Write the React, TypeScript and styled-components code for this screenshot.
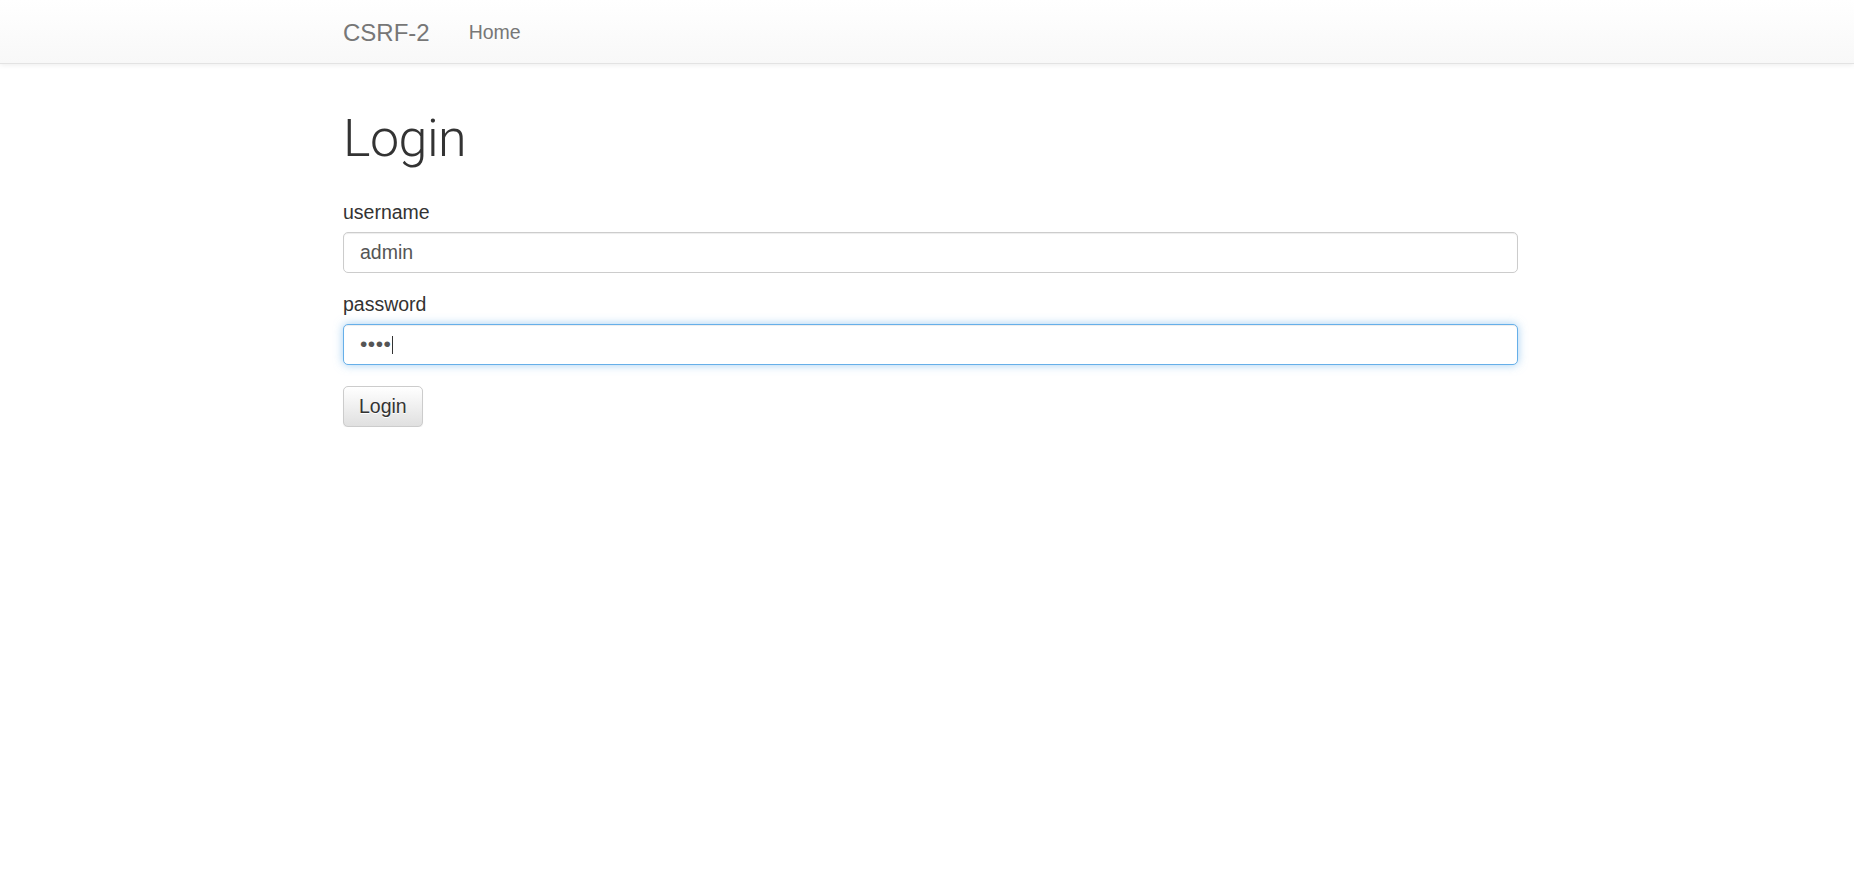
import React from "react";
import styled, { createGlobalStyle } from "styled-components";

const GlobalStyle = createGlobalStyle`
  html, body {
    margin: 0;
    padding: 0;
    background: #fff;
  }

  body {
    font-family: "Liberation Sans", Arial, sans-serif;
    font-size: 19.5px;
    color: #333;
  }
`;

const Navbar = styled.nav`
  height: 63px;
  background-image: linear-gradient(to bottom, #ffffff 0%, #f8f8f8 100%);
  border-bottom: 1px solid #e3e3e3;
  box-shadow: inset 0 1px 0 rgba(255, 255, 255, 0.15), 0 1px 5px rgba(0, 0, 0, 0.075);
`;

const Container = styled.div`
  width: 1175px;
  margin: 0 auto;
  padding-left: 7px;
  box-sizing: content-box;
`;

const NavInner = styled(Container)`
  display: flex;
  align-items: center;
  gap: 39px;
  height: 63px;
`;

const Brand = styled.a`
  font-size: 24px;
  color: #777;
  text-decoration: none;
  line-height: 63px;
  padding-top: 2px;
`;

const NavLink = styled.a`
  font-size: 19.5px;
  color: #777;
  text-decoration: none;
  line-height: 63px;
  padding-top: 2px;
`;

const Main = styled(Container)`
  padding-top: 45px;
`;

const Title = styled.h1`
  margin: 0;
  font-family: Roboto, "Liberation Sans", sans-serif;
  font-weight: 300;
  font-size: 52px;
  line-height: 60px;
  color: #333;
  letter-spacing: -0.5px;
`;

const Form = styled.form`
  margin-top: 31px;
`;

const Group = styled.div`
  margin-bottom: 19.5px;
`;

const Label = styled.label`
  display: block;
  font-size: 19.5px;
  line-height: 24px;
  margin-bottom: 7.5px;
  color: #333;
`;

const FieldWrap = styled.div`
  position: relative;
`;

const Input = styled.input<{ $focused?: boolean }>`
  display: block;
  box-sizing: border-box;
  width: 100%;
  height: 41px;
  padding: 0 16px;
  font-family: "Liberation Sans", Arial, sans-serif;
  font-size: 19.5px;
  color: #555;
  background: #fff;
  border: 1px solid ${(p) => (p.$focused ? "#66afe9" : "#ccc")};
  border-radius: 5px;
  outline: none;
  box-shadow: ${(p) =>
    p.$focused
      ? "inset 0 1px 1px rgba(0,0,0,.075), 0 0 10px rgba(102,175,233,.6)"
      : "inset 0 1px 1px rgba(0,0,0,.075)"};

  &[type="password"] {
    font-size: 21px;
    letter-spacing: 0.5px;
  }
`;

const Caret = styled.span`
  position: absolute;
  left: 49px;
  top: 12px;
  width: 1px;
  height: 18px;
  background: #333;
`;

const Button = styled.button`
  margin-top: 2px;
  height: 41px;
  padding: 0 15px;
  font-family: "Liberation Sans", Arial, sans-serif;
  font-size: 19.5px;
  color: #333;
  background-image: linear-gradient(to bottom, #ffffff 0%, #e0e0e0 100%);
  border: 1px solid #ccc;
  border-radius: 5px;
  box-shadow: inset 0 1px 0 rgba(255, 255, 255, 0.15), 0 1px 1px rgba(0, 0, 0, 0.075);
  text-shadow: 0 1px 0 #fff;
  cursor: pointer;
`;

export default function App() {
  return (
    <>
      <GlobalStyle />
      <Navbar>
        <NavInner>
          <Brand href="#">CSRF-2</Brand>
          <NavLink href="#">Home</NavLink>
        </NavInner>
      </Navbar>
      <Main>
        <Title>Login</Title>
        <Form onSubmit={(e) => e.preventDefault()}>
          <Group>
            <Label htmlFor="username">username</Label>
            <Input id="username" type="text" value="admin" readOnly />
          </Group>
          <Group>
            <Label htmlFor="password">password</Label>
            <FieldWrap>
              <Input id="password" type="password" value="1234" readOnly $focused />
              <Caret />
            </FieldWrap>
          </Group>
          <Button type="submit">Login</Button>
        </Form>
      </Main>
    </>
  );
}
